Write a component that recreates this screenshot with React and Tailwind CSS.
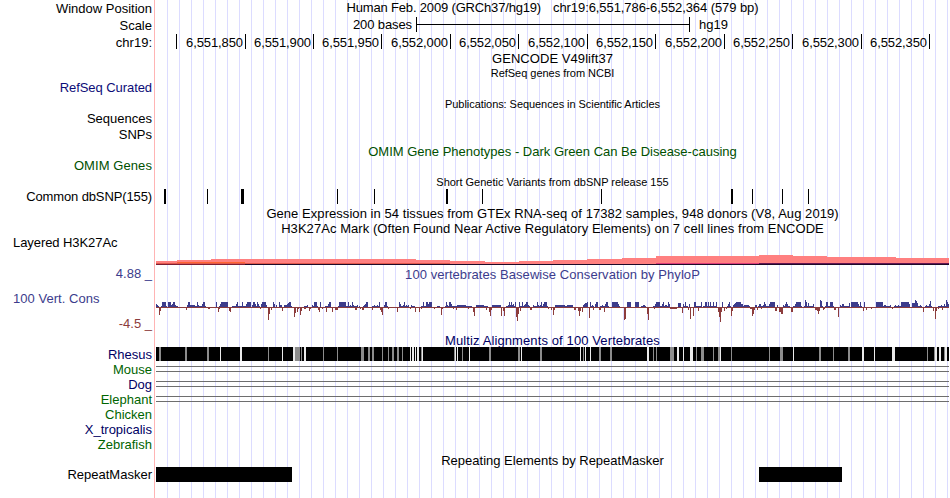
import React from 'react';

const labels = [
    { text: 'Window Position', className: 'mt-px' },
    { text: 'Scale', className: 'mt-0.5' },
    { text: 'chr19:', className: 'mt-0.5' },
    { text: 'RefSeq Curated', className: 'mt-[30px] tracking-[-0.07px] text-[#0c0c78]' },
    { text: 'Sequences', className: 'mt-4' },
    { text: 'SNPs', className: 'mt-px' },
    { text: 'OMIM Genes', className: 'mt-4 tracking-[0.08px] text-[#005000]' },
    { text: 'Common dbSNP(155)', className: 'mt-4 tracking-[-0.12px]' },
    { text: 'Layered H3K27Ac', className: 'mt-[31px] self-start pl-[13px] tracking-[-0.07px]' },
    { text: '4.88 _', className: 'mt-4 text-[#3c3c8c]' },
    { text: '100 Vert. Cons', className: 'mt-2.5 self-start pl-[13px] tracking-[0.04px] text-[#3c3c8c]' },
    { text: '-4.5 _', className: 'mt-2.5 text-[#8c3c3c]' },
    { text: 'Rhesus', className: 'mt-4 text-[#000064]' },
    { text: 'Mouse', className: 'text-[#006400]' },
    { text: 'Dog', className: 'text-[#000064]' },
    { text: 'Elephant', className: 'text-[#006400]' },
    { text: 'Chicken', className: 'text-[#006400]' },
    { text: 'X_tropicalis', className: 'text-[#000064]' },
    { text: 'Zebrafish', className: 'text-[#006400]' },
    { text: 'RepeatMasker', className: 'mt-[15px]' },
];

// Ruler cells, each one ends in its tick
const ruler = [
    { text: '', className: 'w-[22px]' },
    { text: '6,551,850', className: 'w-[69px]' },
    { text: '6,551,900', className: 'w-[68px]' },
    { text: '6,551,950', className: 'w-[68px]' },
    { text: '6,552,000', className: 'w-[69px]' },
    { text: '6,552,050', className: 'w-[68px]' },
    { text: '6,552,100', className: 'w-[69px]' },
    { text: '6,552,150', className: 'w-[68px]' },
    { text: '6,552,200', className: 'w-[69px]' },
    { text: '6,552,250', className: 'w-[68px]' },
    { text: '6,552,300', className: 'w-[69px]' },
    { text: '6,552,350', className: 'w-[68px]' },
];

// [x, width]
const snps = [
    [164, 2], [207, 1], [241, 3], [337, 1], [374, 1], [446, 2],
    [482, 1], [601, 1], [731, 2], [752, 1], [782, 1], [808, 1],
];

// [x, end, height above the base of the track]
const h3k27ac = [
    [156, 177, 4], [177, 211, 5], [211, 416, 6], [416, 450, 5], [450, 485, 4],
    [485, 519, 3], [519, 553, 4], [553, 587, 5], [587, 622, 6], [622, 656, 7],
    [656, 759, 9], [759, 793, 10], [793, 827, 9], [827, 896, 8], [896, 949, 7],
];

// [x, end] of the stretches that score just above zero
const lowScores = [
    [162, 167], [171, 178], [187, 198], [199, 206], [219, 222], [233, 247], [252, 260], [286, 292],
    [304, 308], [312, 318], [325, 330], [338, 342], [346, 358], [363, 368], [372, 379], [384, 388],
    [400, 409], [411, 415], [421, 432], [437, 440], [445, 457], [466, 472], [484, 488], [506, 516],
    [519, 530], [533, 548], [565, 569], [583, 588], [590, 594], [600, 609], [616, 620], [627, 631],
    [641, 646], [653, 656], [660, 669], [684, 688], [694, 701], [703, 717], [727, 731], [733, 750],
    [758, 775], [783, 790], [793, 802], [804, 813], [820, 823], [825, 834], [840, 850], [858, 862],
    [883, 891], [894, 910], [912, 922], [925, 932], [938, 949],
];

// [x, width, score in pixels]
const phyloP = [
    [156, 1, 3], [157, 1, 2], [158, 1, 1], [159, 1, -8], [160, 1, -4], [161, 1, 1], [162, 4, 5], [166, 1, 1],
    [168, 3, 5], [171, 1, 2], [172, 1, 3], [173, 2, 5], [175, 1, 2], [177, 1, 1], [186, 1, -3], [187, 1, 2],
    [188, 2, 5], [190, 5, 2], [195, 1, 1], [197, 1, 5], [198, 1, 2], [200, 1, 1], [201, 1, 1], [202, 1, 3],
    [203, 2, 5], [205, 1, 1], [208, 2, -2], [216, 1, 5], [218, 1, -5], [219, 1, -2], [220, 1, 3], [221, 7, 5],
    [229, 1, -4], [230, 1, -5], [232, 1, 1], [236, 1, 3], [237, 1, 5], [239, 1, 1], [242, 1, 5], [244, 1, 1],
    [246, 1, 3], [247, 4, 5], [252, 1, 2], [253, 2, 5], [255, 1, 3], [257, 1, 5], [258, 1, 3], [260, 1, -2],
    [261, 1, 3], [262, 4, 5], [266, 1, 2], [268, 1, -13], [269, 1, -7], [271, 1, -3], [273, 1, 5], [274, 1, 3],
    [276, 1, 2], [279, 1, 5], [280, 2, 2], [282, 1, -4], [284, 3, 2], [287, 1, 3], [288, 1, 4], [289, 2, 5],
    [291, 1, 1], [294, 1, -10], [295, 1, -6], [297, 1, -5], [298, 1, -2], [300, 1, -8], [301, 1, -4],
    [304, 2, -2], [307, 1, 2], [309, 1, -4], [310, 1, -2], [312, 1, 2], [314, 3, 5], [318, 1, -3],
    [319, 1, -5], [320, 1, 5], [322, 1, -2], [326, 1, -5], [328, 1, 3], [329, 2, 5], [332, 1, -5],
    [335, 3, -3], [339, 7, 5], [346, 1, 1], [348, 1, 5], [350, 1, 2], [352, 1, 5], [353, 1, 2],
    [355, 2, -3], [357, 1, 2], [359, 1, 1], [360, 1, -2], [362, 2, -3], [364, 1, 2], [365, 1, 3], [366, 2, 5],
    [372, 1, -3], [374, 1, 2], [377, 1, 2], [379, 1, 5], [380, 1, -3], [381, 1, -5], [382, 1, -8],
    [384, 1, 2], [385, 2, 5], [388, 1, -2], [397, 1, -5], [399, 1, 5], [400, 1, 3], [403, 1, 2], [404, 1, 5],
    [406, 1, 2], [408, 1, 2], [410, 1, -2], [411, 1, 2], [415, 1, -5], [419, 1, -5], [421, 1, -2],
    [423, 1, 5], [426, 2, 5], [428, 1, 3], [429, 3, 5], [434, 1, -2], [441, 1, -8], [442, 1, -2],
    [446, 1, 5], [447, 1, 2], [449, 2, 5], [451, 1, 3], [453, 1, -2], [456, 1, -3], [457, 9, 2], [466, 2, 1],
    [468, 1, -2], [470, 2, 1], [473, 1, -5], [474, 1, -9], [476, 8, 2], [486, 1, -3], [489, 1, -5],
    [490, 1, -9], [491, 1, -3], [492, 9, 2], [501, 1, -9], [503, 1, -4], [504, 1, -9], [506, 2, 1],
    [508, 1, 2], [509, 1, 5], [510, 1, 2], [511, 1, 5], [512, 1, 2], [513, 1, 3], [515, 1, 5], [516, 1, -10],
    [517, 1, -14], [518, 1, -7], [519, 1, 5], [520, 1, -4], [522, 1, 5], [524, 1, 2], [525, 1, 3],
    [526, 2, 5], [528, 1, 2], [530, 2, -3], [533, 1, 2], [537, 1, 5], [538, 1, 2], [540, 1, 2], [541, 1, 5],
    [543, 1, 3], [544, 3, 5], [548, 1, -2], [551, 1, -3], [553, 1, -8], [554, 1, -3], [555, 10, 2],
    [567, 6, 2], [574, 2, -3], [578, 1, -4], [579, 1, -9], [580, 1, -4], [582, 1, -5], [583, 1, 2],
    [584, 1, 3], [585, 2, 4], [587, 1, 5], [589, 1, -11], [590, 1, 5], [592, 1, 2], [593, 1, -3],
    [595, 1, 3], [596, 2, 5], [599, 2, -3], [602, 1, 2], [604, 1, -5], [605, 1, 3], [606, 2, 5],
    [612, 6, 5], [618, 1, 3], [624, 1, -13], [625, 1, -12], [627, 4, 5], [635, 4, 5], [643, 2, 2],
    [647, 1, -7], [648, 1, -13], [653, 1, 1], [654, 1, -2], [655, 1, 3], [656, 4, 5], [662, 1, 3],
    [663, 1, 5], [665, 2, 2], [668, 1, 5], [669, 1, 3], [670, 7, -2], [678, 3, 4], [682, 1, -6],
    [683, 1, 3], [685, 1, 5], [688, 1, -3], [689, 1, 3], [690, 1, -12], [693, 1, -9], [694, 2, 5],
    [698, 1, -4], [701, 1, 5], [705, 2, 5], [708, 1, 5], [710, 1, 5], [713, 1, 5], [716, 1, 5],
    [718, 1, -5], [719, 1, -10], [720, 1, -15], [721, 1, -5], [722, 1, 5], [724, 1, -4], [726, 1, -2],
    [728, 1, 3], [729, 1, 5], [731, 1, -9], [732, 1, -4], [733, 1, 2], [734, 1, 3], [735, 1, 4],
    [736, 5, 5], [741, 2, 3], [744, 5, 2], [750, 2, -2], [752, 1, -9], [753, 1, -7], [754, 1, -3],
    [755, 2, 2], [757, 1, -3], [759, 2, 3], [761, 1, -2], [763, 1, 2], [764, 1, 5], [765, 1, 3],
    [769, 1, 3], [770, 5, 5], [775, 2, -4], [777, 1, 2], [779, 2, -5], [781, 2, -7], [783, 1, 2],
    [785, 1, 3], [786, 1, 5], [787, 1, 3], [791, 2, -5], [795, 1, 3], [796, 5, 5], [805, 1, 7], [806, 1, 5],
    [808, 1, 4], [813, 1, 3], [815, 2, -3], [817, 1, -4], [818, 1, -7], [819, 1, -4], [820, 1, 7],
    [821, 1, 6], [823, 1, -3], [824, 1, -2], [826, 2, 5], [830, 3, 5], [834, 2, -3], [838, 1, -10],
    [840, 1, 2], [842, 2, 3], [849, 1, 4], [851, 7, 5], [858, 1, 3], [860, 1, 5], [861, 1, 1],
    [863, 1, -4], [864, 1, 5], [866, 1, -3], [871, 1, -2], [876, 7, 5], [884, 2, 2], [890, 1, 2],
    [892, 1, -2], [895, 1, 2], [898, 1, 2], [901, 8, 5], [909, 1, 3], [912, 1, 4], [913, 2, 4],
    [915, 1, 7], [916, 1, 6], [917, 1, 4], [920, 1, 2], [923, 1, -5], [926, 1, 2], [929, 1, 3],
    [930, 1, 6], [933, 1, -4], [935, 1, -12], [936, 1, -4], [938, 1, -2], [941, 1, 2], [942, 1, -3],
    [944, 1, 3], [946, 1, 7], [947, 1, 5], [948, 1, 3],
];

const rhesusGray = [
    [159, 2], [185, 2], [207, 2], [268, 1], [295, 5], [301, 1], [323, 1], [337, 1], [361, 3], [368, 2],
    [372, 2], [382, 1], [388, 1], [392, 2], [397, 2], [402, 1], [421, 1], [454, 1], [462, 1], [489, 2],
    [518, 2], [540, 2], [583, 1], [599, 2], [610, 2], [653, 1], [656, 1], [670, 4], [696, 1], [701, 3],
    [713, 1], [718, 2], [731, 1], [769, 1], [780, 3], [819, 2], [833, 1], [848, 2], [927, 1], [934, 1],
    [944, 1],
];

const rhesusLight = [
    [220, 1], [240, 2], [282, 1], [293, 2], [304, 2], [410, 1], [412, 2], [415, 1], [417, 2], [422, 1],
    [455, 1], [457, 1], [469, 1], [521, 1], [580, 1], [585, 1], [590, 1], [647, 2], [677, 2], [683, 1],
    [690, 3], [720, 1], [793, 1], [862, 2], [874, 1], [892, 3], [935, 2], [939, 2], [945, 2],
];

const Chart = ({ height, className = '', children }) => (
    <svg
        width="795"
        height={height}
        viewBox={`155 0 795 ${height}`}
        shapeRendering="crispEdges"
        className={`block shrink-0 ${className}`}
    >
        {children}
    </svg>
);

const Title = ({ className = '', children }) => (
    <div className={`h-[15px] shrink-0 text-center leading-[15px] whitespace-pre ${className}`}>{children}</div>
);

const Conservation = () => (
    <Chart height={49}>
        <rect x="156" y="25" width="793" height="1" fill="#8c3c3c" />
        {lowScores.map(([x, end]) => (
            <rect key={x} x={x} y="24" width={end - x} height="1" fill="#3c3c8c" />
        ))}
        {phyloP.map(([x, w, score]) => (
            <rect
                key={x}
                x={x}
                y={score > 0 ? 25 - score : 25}
                width={w}
                height={Math.abs(score)}
                fill={score > 0 ? '#3c3c8c' : '#8c3c3c'}
            />
        ))}
    </Chart>
);

const PairLines = () => (
    <div className="mt-[9px] mr-px ml-px h-1.5 shrink-0 border-y border-[#6e6e6e]" />
);

const App = () => {
    return (
        <div className="flex h-[498px] w-[950px] overflow-hidden bg-white font-['Liberation_Sans',Arial,sans-serif] text-[13px] text-black">
            <aside className="flex w-[154px] shrink-0 flex-col items-end pr-0.5">
                {labels.map(({ text, className }) => (
                    <div key={text} className={`h-[15px] shrink-0 leading-[15px] whitespace-pre ${className}`}>
                        {text}
                    </div>
                ))}
            </aside>
            <div className="w-px shrink-0 bg-[#ffb4b4]" />

            {/* Tracks, over guide lines 12px apart */}
            <main className="flex w-[795px] shrink-0 flex-col bg-[repeating-linear-gradient(to_right,#dcdcff_0px,#dcdcff_1px,transparent_1px,transparent_12px)] bg-[position:12px_0] bg-no-repeat">
                <Title className="flex justify-center gap-3">
                    <span className="tracking-[-0.17px]">Human Feb. 2009 (GRCh37/hg19)</span>
                    <span className="tracking-[-0.08px]">chr19:6,551,786-6,552,364 (579 bp)</span>
                </Title>

                <div className="mt-0.5 flex h-[15px] shrink-0 leading-[15px]">
                    <div className="w-[261px] pr-1 text-right tracking-[-0.1px]">200 bases</div>
                    <div className="flex w-[274px] items-center border-x border-black">
                        <div className="h-px w-full bg-black" />
                    </div>
                    <div className="pl-[9px]">hg19</div>
                </div>

                <div className="mt-0.5 flex h-[15px] shrink-0">
                    {ruler.map(({ text, className }) => (
                        <div
                            key={text}
                            className={`shrink-0 border-r border-black pr-0.5 text-right leading-[17px] tracking-[-0.1px] ${className}`}
                        >
                            {text}
                        </div>
                    ))}
                </div>

                <Title className="mt-0.5 tracking-[0.06px]">GENCODE V49lift37</Title>
                <Title className="text-[11px] tracking-[-0.03px]">RefSeq genes from NCBI</Title>
                <Title className="mt-4 text-[11px] tracking-[-0.06px]">Publications: Sequences in Scientific Articles</Title>
                <Title className="mt-8 text-[#005000]">OMIM Gene Phenotypes - Dark Green Can Be Disease-causing</Title>
                <Title className="mt-4 text-[11px] tracking-[-0.02px]">Short Genetic Variants from dbSNP release 155</Title>
                <Chart height={15} className="-mt-px">
                    {snps.map(([x, w]) => (
                        <rect key={x} x={x} y="0" width={w} height="15" />
                    ))}
                </Chart>
                <Title className="mt-0.5 tracking-[0.055px]">
                    Gene Expression in 54 tissues from GTEx RNA-seq of 17382 samples, 948 donors (V8, Aug 2019)
                </Title>
                <Title className="tracking-[0.06px]">
                    H3K27Ac Mark (Often Found Near Active Regulatory Elements) on 7 cell lines from ENCODE
                </Title>

                <Chart height={29}>
                    {h3k27ac.map(([x, end, h]) => (
                        <rect key={x} x={x} y={29 - h} width={end - x} height={h} fill="#ff8080" />
                    ))}
                    <rect x="156" y="27" width="294" height="1" fill="#e0584c" />
                    <rect x="177" y="26" width="68" height="1" fill="#ff6432" />
                    <rect x="656" y="27" width="103" height="1" fill="#dc3c78" />
                    <rect x="759" y="27" width="190" height="1" fill="#641450" />
                    <rect x="156" y="28" width="793" height="1" fill="#1e0a28" />
                    <rect x="156" y="28" width="89" height="1" fill="#7d1e32" />
                </Chart>

                <Title className="mt-0.5 tracking-[0.06px] text-[#3c3c8c]">100 vertebrates Basewise Conservation by PhyloP</Title>
                <Conservation />

                <Title className="mt-0.5 tracking-[0.11px] text-[#000064]">Multiz Alignments of 100 Vertebrates</Title>
                <Chart height={14} className="-mt-px">
                    <rect x="156" y="0" width="793" height="14" />
                    {rhesusGray.map(([x, w]) => (
                        <rect key={x} x={x} y="0" width={w} height="14" fill="#8c8c8c" />
                    ))}
                    {rhesusLight.map(([x, w]) => (
                        <rect key={x} x={x} y="0" width={w} height="14" fill="#ebebeb" />
                    ))}
                </Chart>
                <div className="-mt-1 flex shrink-0 flex-col">
                    <PairLines />
                    <PairLines />
                    <PairLines />
                </div>

                <Title className="mt-[51px]">Repeating Elements by RepeatMasker</Title>
                <Chart height={15} className="-mt-px">
                    <rect x="156" y="0" width="136" height="15" />
                    <rect x="759" y="0" width="83" height="15" />
                </Chart>
            </main>
        </div>
    );
};

export default App;
